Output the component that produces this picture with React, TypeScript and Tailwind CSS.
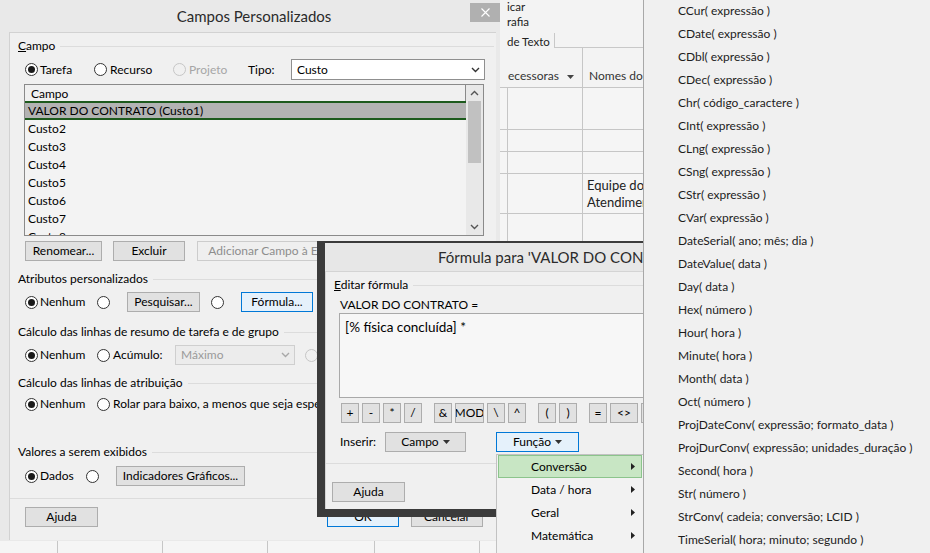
import React from "react";

const Radio = ({ checked = false, disabled = false }: { checked?: boolean; disabled?: boolean }) => (
  <span
    className={
      disabled
        ? "flex h-[13px] w-[13px] shrink-0 items-center justify-center rounded-full border border-[#c6c6c6] bg-[#f0f0f0]"
        : "flex h-[13px] w-[13px] shrink-0 items-center justify-center rounded-full border border-[#333333] bg-white"
    }
  >
    {checked && <span className="h-[7px] w-[7px] rounded-full bg-[#1a1a1a]" />}
  </span>
);

const Btn = ({
  children,
  className = "",
  focus = false,
  disabled = false,
}: {
  children: React.ReactNode;
  className?: string;
  focus?: boolean;
  disabled?: boolean;
}) => {
  let look = "border-[#adadad] bg-[#e1e1e1] text-black";
  if (focus) look = "border-[#0078d7] bg-[#e5f1fb] text-black";
  if (disabled) look = "border-[#cccccc] bg-[#efefef] text-[#8d8d8d]";
  return (
    <div className={`flex h-[20px] shrink-0 items-center justify-center overflow-hidden whitespace-nowrap border ${look} ${className}`}>
      {children}
    </div>
  );
};

const Group = ({ children, className = "" }: { children: React.ReactNode; className?: string }) => (
  <div className={`flex h-[16px] shrink-0 items-center pl-[8px] ${className}`}>
    <span className="whitespace-nowrap">{children}</span>
    <span className="ml-[5px] mr-[2px] h-px flex-1 bg-[#dcdcdc]" />
  </div>
);

const Chevron = ({ up = false, color = "#333333" }: { up?: boolean; color?: string }) => (
  <svg width="9" height="6" viewBox="0 0 9 6">
    <polyline
      points={up ? "1,5 4.5,1.5 8,5" : "1,1 4.5,4.5 8,1"}
      fill="none"
      stroke={color}
      strokeWidth="1.4"
    />
  </svg>
);

const TriDown = () => (
  <svg width="7" height="4" viewBox="0 0 7 4" className="ml-[4px]">
    <polygon points="0,0 7,0 3.5,4" fill="#333333" />
  </svg>
);

const TriRight = () => (
  <svg width="4" height="7" viewBox="0 0 4 7">
    <polygon points="0,0 4,3.5 0,7" fill="#222222" />
  </svg>
);

const customRows = ["Custo2", "Custo3", "Custo4", "Custo5", "Custo6", "Custo7", "Custo8"];

const functions = [
  "CCur( expressão )",
  "CDate( expressão )",
  "CDbl( expressão )",
  "CDec( expressão )",
  "Chr( código_caractere )",
  "CInt( expressão )",
  "CLng( expressão )",
  "CSng( expressão )",
  "CStr( expressão )",
  "CVar( expressão )",
  "DateSerial( ano; mês; dia )",
  "DateValue( data )",
  "Day( data )",
  "Hex( número )",
  "Hour( hora )",
  "Minute( hora )",
  "Month( data )",
  "Oct( número )",
  "ProjDateConv( expressão; formato_data )",
  "ProjDurConv( expressão; unidades_duração )",
  "Second( hora )",
  "Str( número )",
  "StrConv( cadeia; conversão; LCID )",
  "TimeSerial( hora; minuto; segundo )",
];

const ops: [string, string][][] = [
  [["+", "w-[18px]"], ["-", "w-[18px]"], ["*", "w-[18px]"], ["/", "w-[18px]"]],
  [["&", "w-[18px]"], ["MOD", "w-[29px]"], ["\\", "w-[18px]"], ["^", "w-[18px]"]],
  [["(", "w-[18px]"], [")", "w-[18px]"]],
  [["=", "w-[18px]"], ["<>", "w-[28px]"], [">", "w-[18px]"]],
];

function Sheet() {
  return (
    <div className="absolute left-[500px] top-0 flex h-[553px] w-[143px] flex-col bg-[#f5f5f5] text-[13px] text-[#222222]">
      <div className="flex h-[48px] shrink-0 bg-[#f3f3f3]">
        <div className="flex w-[54px] shrink-0 flex-col whitespace-nowrap pl-[7px] text-[11.5px] leading-[15px]">
          <span className="mt-[-1px]">icar</span>
          <span>rafia</span>
          <span className="mt-[5px]">de Texto</span>
        </div>
        <div className="h-[15px] flex-1 self-end border-b border-l border-[#c8c8c8]" />
      </div>
      <div className="flex h-[40px] shrink-0 border-b border-[#c6c6c6] bg-[#f3f3f3]">
        <div className="flex w-[83px] shrink-0 items-center border-r border-[#c6c6c6] pl-[8px] pt-[16px] text-[12px] text-[#333333]">
          <span>ecessoras</span>
          <svg width="7" height="4" viewBox="0 0 7 4" className="ml-[8px] mt-[2px]">
            <polygon points="0,0 7,0 3.5,4" fill="#444444" />
          </svg>
        </div>
        <div className="flex items-center whitespace-nowrap pl-[6px] pt-[16px] text-[12px] text-[#333333]">Nomes do</div>
      </div>
      {[42, 22, 22, 40, 60, 60, 60, 60, 60].map((h, i) => (
        <div key={i} className="flex shrink-0 border-b border-[#c6c6c6]" style={{ height: h }}>
          <div className="w-[7px] shrink-0" />
          <div className="w-[76px] shrink-0 border-l border-r border-[#c6c6c6]" />
          <div className="flex flex-col justify-center whitespace-nowrap pl-[4px] leading-[17px]">
            {i === 3 && (
              <>
                <span>Equipe do</span>
                <span>Atendimento</span>
              </>
            )}
          </div>
        </div>
      ))}
    </div>
  );
}

function CamposDialog() {
  return (
    <div className="absolute left-0 top-0 flex h-[541px] w-[500px] flex-col bg-[#e9e9e9]">
      <div className="relative flex h-[32px] shrink-0 items-center justify-center text-[15px] text-[#2b2b2b]">
        <span className="ml-[8px]">Campos Personalizados</span>
        <div className="absolute right-0 top-[3px] flex h-[19px] w-[30px] items-center justify-center bg-[#b0b0b0]">
          <svg width="9" height="9" viewBox="0 0 9 9">
            <path d="M0.5 0.5 L8.5 8.5 M8.5 0.5 L0.5 8.5" stroke="#ffffff" strokeWidth="1.1" />
          </svg>
        </div>
      </div>
      <div className="mb-[1px] ml-[9px] mr-[4px] flex flex-1 flex-col border-l border-t border-[#d2d2d2] bg-[#f0f0f0]">
        <Group className="mt-[5px]">
          <span className="underline">C</span>ampo
        </Group>

        <div className="mt-[5px] flex h-[21px] shrink-0 items-center pl-[15px]">
          <div className="flex w-[69px] items-center gap-[2px]">
            <Radio checked />
            <span>Tarefa</span>
          </div>
          <div className="flex w-[79px] items-center gap-[3px]">
            <Radio />
            <span>Recurso</span>
          </div>
          <div className="flex w-[75px] items-center gap-[3px] text-[#a6a6a6]">
            <Radio disabled />
            <span>Projeto</span>
          </div>
          <div className="w-[43px]">Tipo:</div>
          <div className="flex h-[21px] w-[194px] items-center justify-between border border-[#8f8f8f] bg-white pl-[5px] pr-[4px]">
            <span>Custo</span>
            <Chevron />
          </div>
        </div>

        <div className="ml-[14px] mt-[4px] flex h-[152px] w-[460px] shrink-0 border border-[#8a8a8a] bg-[#f3f3f3]">
          <div className="flex flex-1 flex-col overflow-hidden">
            <div className="flex h-[16px] shrink-0 items-center border-r border-[#8a8a8a] bg-[#f0f0f0] pl-[6px] pt-[2px]">Campo</div>
            <div className="flex h-[19px] shrink-0 items-center bg-[#b3b3b3] pl-[3px] shadow-[inset_0_2px_0_#1d5a1d,inset_0_-2px_0_#1d5a1d]">
              VALOR DO CONTRATO (Custo1)
            </div>
            {customRows.map((r) => (
              <div key={r} className="flex h-[18px] shrink-0 items-center pl-[3px]">
                {r}
              </div>
            ))}
          </div>
          <div className="flex w-[17px] shrink-0 flex-col bg-[#e8e8e8]">
            <div className="flex h-[16px] shrink-0 items-center justify-center">
              <Chevron up color="#555555" />
            </div>
            <div className="mx-[2px] h-[62px] shrink-0 bg-[#c1c1c1]" />
            <div className="flex-1" />
            <div className="flex h-[17px] shrink-0 items-center justify-center">
              <Chevron color="#555555" />
            </div>
          </div>
        </div>

        <div className="mt-[5px] flex shrink-0 items-center pl-[15px]">
          <Btn className="w-[77px]">Renomear...</Btn>
          <Btn className="ml-[11px] w-[72px]">Excluir</Btn>
          <Btn className="ml-[12px] w-[170px]" disabled>
            Adicionar Campo à Empresa
          </Btn>
        </div>

        <Group className="mt-[10px]">Atributos personalizados</Group>
        <div className="mt-[6px] flex h-[18px] shrink-0 items-center pl-[15px]">
          <div className="flex w-[72px] items-center gap-[2px]">
            <Radio checked />
            <span>Nenhum</span>
          </div>
          <div className="w-[30px]">
            <Radio />
          </div>
          <Btn className="h-[19px] w-[73px]">Pesquisar...</Btn>
          <div className="ml-[11px] w-[30px]">
            <Radio />
          </div>
          <Btn className="h-[19px] w-[72px]" focus>
            Fórmula...
          </Btn>
        </div>

        <Group className="mt-[13px]">Cálculo das linhas de resumo de tarefa e de grupo</Group>
        <div className="mt-[5px] flex h-[20px] shrink-0 items-center pl-[15px]">
          <div className="flex w-[72px] items-center gap-[2px]">
            <Radio checked />
            <span>Nenhum</span>
          </div>
          <div className="flex w-[78px] items-center gap-[3px]">
            <Radio />
            <span>Acúmulo:</span>
          </div>
          <div className="flex h-[20px] w-[120px] items-center justify-between border border-[#cfcfcf] bg-[#ececec] pl-[5px] pr-[4px] text-[#9a9a9a]">
            <span>Máximo</span>
            <Chevron color="#a8a8a8" />
          </div>
          <div className="ml-[10px]">
            <Radio disabled />
          </div>
        </div>

        <Group className="mt-[10px]">Cálculo das linhas de atribuição</Group>
        <div className="mt-[4px] flex h-[18px] shrink-0 items-center whitespace-nowrap pl-[15px]">
          <div className="flex w-[72px] items-center gap-[2px]">
            <Radio checked />
            <span>Nenhum</span>
          </div>
          <div className="flex items-center gap-[3px]">
            <Radio />
            <span>Rolar para baixo, a menos que seja especificado</span>
          </div>
        </div>

        <Group className="mt-[31px]">Valores a serem exibidos</Group>
        <div className="mt-[6px] flex h-[20px] shrink-0 items-center pl-[15px]">
          <div className="flex w-[61px] items-center gap-[2px]">
            <Radio checked />
            <span>Dados</span>
          </div>
          <div className="w-[30px]">
            <Radio />
          </div>
          <Btn className="w-[129px]">Indicadores Gráficos...</Btn>
        </div>

        <div className="mt-[12px] h-px shrink-0 bg-[#dcdcdc]" />

        <div className="mt-[8px] flex shrink-0 items-center pl-[15px] pr-[13px]">
          <Btn className="w-[73px]">Ajuda</Btn>
          <Btn className="ml-auto w-[72px]" focus>
            OK
          </Btn>
          <Btn className="ml-[12px] w-[72px]">Cancelar</Btn>
        </div>
      </div>
    </div>
  );
}

function FormulaDialog() {
  return (
    <div className="absolute left-[317px] top-[241px] flex h-[276px] w-[420px] flex-col bg-[#3b3b3b] pb-[8px] pl-[8px] pt-[2px]">
      <div className="flex h-[28px] shrink-0 items-center whitespace-nowrap bg-[#e7e7e7] pl-[113px] text-[15px] text-[#2b2b2b]">
        Fórmula para 'VALOR DO CONTRATO'
      </div>
      <div className="flex flex-1 flex-col border-l border-t border-[#d4d4d4] bg-[#f0f0f0]">
        <Group className="mt-[5px]">
          <span className="underline">E</span>ditar fórmula
        </Group>
        <div className="mt-[4px] flex h-[16px] shrink-0 items-center pl-[14px]">VALOR DO CONTRATO =</div>
        <div className="ml-[13px] h-[85px] shrink-0 border border-[#a9a9a9] bg-[#f7f7f7] pl-[5px] pt-[4px] text-[13.5px] leading-[18px]">
          [% física concluída] *
        </div>
        <div className="ml-[15px] mt-[5px] flex h-[19px] shrink-0 items-center gap-[12px]">
          {ops.map((g, gi) => (
            <div key={gi} className="flex gap-[3px]">
              {g.map(([t, w]) => (
                <Btn key={t} className={`h-[19px] ${w}`}>
                  {t}
                </Btn>
              ))}
            </div>
          ))}
        </div>
        <div className="mt-[10px] flex h-[20px] shrink-0 items-center pl-[14px]">
          <span className="w-[45px]">Inserir:</span>
          <Btn className="w-[81px]">
            Campo
            <TriDown />
          </Btn>
          <Btn className="ml-[30px] w-[83px]" focus>
            Função
            <TriDown />
          </Btn>
        </div>
        <div className="mt-[11px] h-px shrink-0 bg-[#dcdcdc]" />
        <div className="ml-[6px] mt-[18px] flex shrink-0">
          <Btn className="w-[73px]">Ajuda</Btn>
        </div>
      </div>
    </div>
  );
}

function FuncaoMenu() {
  const items = ["Conversão", "Data / hora", "Geral", "Matemática"];
  return (
    <div className="absolute left-[496px] top-[454px] flex h-[110px] w-[148px] flex-col border border-[#c2c2c2] bg-[#f2f2f2] px-[1px]">
      {items.map((t, i) => (
        <div
          key={t}
          className={
            i === 0
              ? "flex h-[23px] shrink-0 items-center justify-between border border-[#8cc48c] bg-[#c8e6c4] pl-[32px] pr-[6px]"
              : "flex h-[23px] shrink-0 items-center justify-between pl-[33px] pr-[7px]"
          }
        >
          <span>{t}</span>
          <TriRight />
        </div>
      ))}
    </div>
  );
}

function FunctionList() {
  return (
    <div className="absolute left-[643px] top-0 flex h-[553px] w-[287px] flex-col border-l border-[#a8a8a8] bg-[#f0f0f0] text-[#1c1c1c]">
      <div className="-mt-[1px] flex flex-col">
        {functions.map((f) => (
          <div key={f} className="flex h-[23px] shrink-0 items-center whitespace-nowrap pl-[34px]">
            {f}
          </div>
        ))}
      </div>
    </div>
  );
}

function BottomStrip() {
  return (
    <div className="absolute left-0 top-[541px] flex h-[12px] w-[500px] bg-[#f5f5f5]">
      {[58, 105, 105, 107, 105].map((w, i) => (
        <div key={i} className="h-full shrink-0 border-r border-[#c6c6c6]" style={{ width: w }} />
      ))}
    </div>
  );
}

export default function App() {
  return (
    <div className="relative h-[553px] w-[930px] overflow-hidden bg-[#f4f4f4] font-['Lato',sans-serif] text-[12px] leading-[16px] text-black">
      <Sheet />
      <BottomStrip />
      <CamposDialog />
      <FormulaDialog />
      <FuncaoMenu />
      <FunctionList />
    </div>
  );
}
